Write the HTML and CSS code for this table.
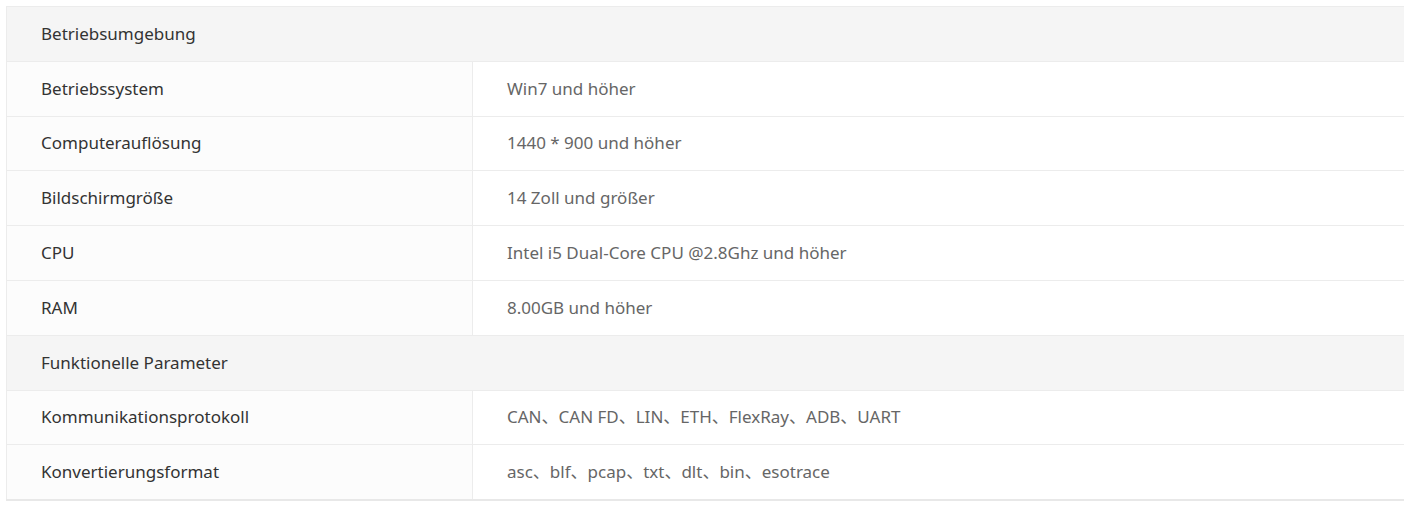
FILE: index.html
```html
<!DOCTYPE html>
<html lang="de">
<head>
<meta charset="utf-8">
<link rel="stylesheet" href="styles.css">
</head>
<body>
<table class="spec">
  <colgroup><col class="col-label"><col class="col-value"></colgroup>
  <tr class="group"><td colspan="2">Betriebsumgebung</td></tr>
  <tr><td class="label">Betriebssystem</td><td class="value">Win7 und höher</td></tr>
  <tr><td class="label">Computerauflösung</td><td class="value">1440 * 900 und höher</td></tr>
  <tr><td class="label">Bildschirmgröße</td><td class="value">14 Zoll und größer</td></tr>
  <tr><td class="label">CPU</td><td class="value">Intel i5 Dual-Core CPU @2.8Ghz und höher</td></tr>
  <tr><td class="label">RAM</td><td class="value">8.00GB und höher</td></tr>
  <tr class="group"><td colspan="2">Funktionelle Parameter</td></tr>
  <tr><td class="label">Kommunikationsprotokoll</td><td class="value">CAN、CAN FD、LIN、ETH、FlexRay、ADB、UART</td></tr>
  <tr><td class="label">Konvertierungsformat</td><td class="value">asc、blf、pcap、txt、dlt、bin、esotrace</td></tr>
</table>
</body>
</html>
```
FILE: styles.css
```css
body {
  margin: 6px;
  background: #fff;
  font-family: "Noto Sans", "Noto Sans CJK SC", sans-serif;
  font-size: 17px;
}
.spec {
  width: 1400px;
  border-collapse: collapse;
  table-layout: fixed;
  border-top: 1px solid #ececec;
  border-left: 1px solid #ececec;
  border-right: 1px solid #ececec;
  border-bottom: 2px solid #e8e8e8;
}
.col-label { width: 466px; }
.spec td {
  height: 53.8px;
  padding: 0 0 0 34px;
  border-bottom: 1px solid #ececec;
  vertical-align: middle;
  line-height: 24px;
}
.group td {
  background: #f5f5f5;
  color: #333;
}
.label {
  background: #fcfcfc;
  color: #333;
  border-right: 1px solid #ececec;
}
.value {
  background: #fff;
  color: #666;
}
```
